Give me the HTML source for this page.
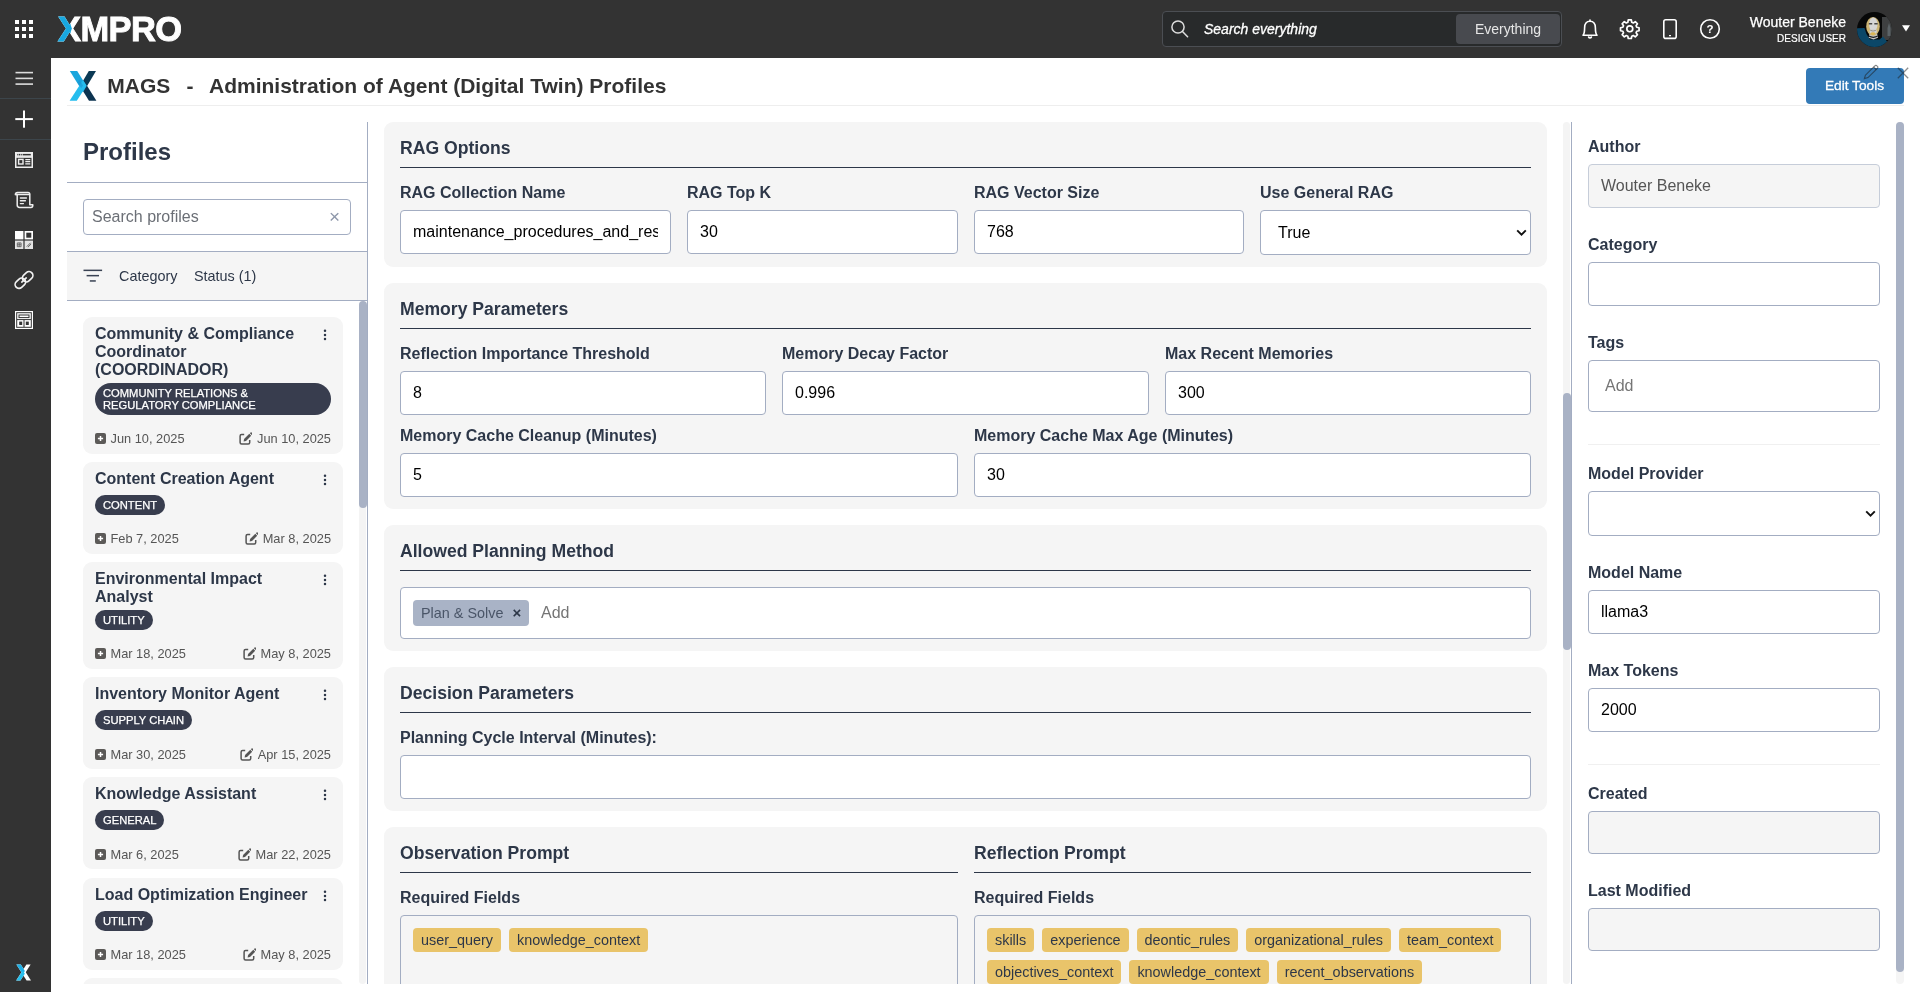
<!DOCTYPE html>
<html lang="en">
<head>
<meta charset="utf-8">
<title>MAGS - Administration of Agent (Digital Twin) Profiles</title>
<style>
*{box-sizing:border-box;margin:0;padding:0}
html,body{width:1920px;height:992px;overflow:hidden;background:#fff}
body{will-change:transform;font-family:"Liberation Sans",Arial,Helvetica,sans-serif;color:#2d3748;position:relative}
.abs{position:absolute}
/* ---------- top bar ---------- */
#topbar{position:absolute;left:0;top:0;width:1920px;height:58px;background:#333}
#sidebar{position:absolute;left:0;top:58px;width:51px;height:934px;background:#333}
.sep{position:absolute;left:0;width:51px;height:1px;background:#3c454b}
#brand{position:absolute;left:58px;top:8px;font-size:35px;line-height:41px;font-weight:bold;color:#fff;letter-spacing:-0.6px;white-space:nowrap;-webkit-text-stroke:0.9px #fff;transform-origin:0 0;transform:scaleX(0.985)}
#brand .bx{position:relative;display:inline-block}
#brand .bx::before{content:"X";position:absolute;left:0;top:0;color:#18a8e0;-webkit-text-stroke:0.9px #18a8e0;clip-path:polygon(-2px 0,30% 0,62% 50%,30% 100%,-2px 100%)}
#gsearch{position:absolute;left:1162px;top:11px;width:400px;height:36px;border:1px solid #4b4e53;border-radius:4px;background:#282a2b}
#gsearch .ph{position:absolute;left:41px;top:9px;font-size:14px;line-height:16px;font-style:italic;color:#fff;white-space:nowrap;-webkit-text-stroke:0.3px #fff}
#gsearch .btn{position:absolute;left:293px;top:2px;width:104px;height:30px;border-radius:4px;background:#484a4f;color:#e6e6e6;font-size:14px;line-height:30px;text-align:center}
#uname{position:absolute;right:74px;top:14px;font-size:14px;line-height:16px;color:#fff;white-space:nowrap;-webkit-text-stroke:0.25px #fff}
#urole{position:absolute;right:74px;top:32.6px;font-size:10px;line-height:12px;color:#fff;white-space:nowrap;-webkit-text-stroke:0.2px #fff}
/* ---------- title ---------- */
#title span{position:absolute;top:74px;font-size:21px;line-height:24px;font-weight:bold;color:#333;white-space:nowrap}
#titleline{position:absolute;left:67px;top:105px;width:1837px;height:1px;background:#eeeeee}
#edittools{position:absolute;left:1806px;top:68px;width:98px;height:36px;border-radius:4px;background:#337ab7;color:#fff;font-size:13.7px;line-height:36px;text-align:center;padding-right:1px;-webkit-text-stroke:0.3px #fff}
/* ---------- left panel ---------- */
#left{position:absolute;left:67px;top:122px;width:301px;height:862px;border-right:1px solid #a3adc2;overflow:hidden}
#left h2{position:absolute;left:16px;top:14.8px;font-size:24px;line-height:30px;font-weight:bold;color:#2d3748}
.hl{position:absolute;left:0;width:300px;height:1px;background:#a3adc2}
#psearch{position:absolute;left:16px;top:77px;width:268px;height:36px;border:1px solid #a3adc2;border-radius:4px;background:#fff}
#psearch .ph{position:absolute;left:8px;top:8px;font-size:16px;line-height:18px;color:#6b6f76}
#psearch .x{position:absolute;right:10px;top:7.5px;font-size:19px;line-height:18px;color:#8f98ab}
#filter{position:absolute;left:0;top:130px;width:300px;height:48px;background:#f5f5f5}
#filter span{position:absolute;top:16px;font-size:14.4px;line-height:17px;color:#2d3748}
#list{position:absolute;left:16px;top:195px;width:260px}
.card{position:relative;width:260px;background:#f5f5f5;border-radius:9px;padding:8px 12px 7.5px 12px;margin-bottom:8.3px}
.card .t{min-height:21.4px;font-size:16px;line-height:18px;font-weight:bold;color:#2d3748;padding-right:22px}
.card .k{position:absolute;right:16px;top:12px;width:4px;height:12px}
.pill{display:inline-block;vertical-align:top;margin-top:3.6px;background:#383d4e;color:#fff;border-radius:16px;font-size:11.2px;line-height:12px;padding:4px 8px;text-transform:uppercase;-webkit-text-stroke:0.25px #fff}
.card .d{display:flex;justify-content:space-between;margin-top:16.5px;font-size:12.8px;line-height:15px;color:#555;height:15px}
.card .d span{display:flex;align-items:center}
.card .d svg{margin-right:4.5px;display:block}
.thumb{position:absolute;background:#a9b2c5;border-radius:4px}
/* ---------- middle panel ---------- */
#mid{position:absolute;left:384px;top:122px;width:1163px;height:862px;overflow:hidden}
.sec{position:absolute;left:0;width:1163px;background:#f5f5f5;border-radius:9px}
.sec h3{position:absolute;left:16px;top:16px;font-size:17.6px;line-height:21px;font-weight:bold;color:#2d3748;padding-bottom:8px;border-bottom:1px solid #2d3748;width:1131px;white-space:nowrap}
.lb{position:absolute;font-size:16px;line-height:18px;font-weight:bold;color:#2d3748;white-space:nowrap}
.in{position:absolute;height:44px;border:1px solid #a3adc2;border-radius:4px;background:#fff;font-size:16px;line-height:18px;color:#000;padding:11.5px 12px 0 12px;white-space:nowrap;overflow:hidden}
.in.dis{background:#f5f5f5;color:#555}
.in .clip{display:block;overflow:hidden;width:100%}
.box{position:absolute;border:1px solid #a3adc2;border-radius:4px;background:#fff}
.chip{position:absolute;border-radius:4px;font-size:14.4px;line-height:16px;white-space:nowrap;padding:4px 8px;height:24px;background:#e9c46a;color:#2d3748}
.add{position:absolute;font-size:16px;line-height:18px;color:#757575}
/* ---------- right panel ---------- */
#right{position:absolute;left:1571px;top:122px;width:333px;height:862px;border-left:1px solid #a3adc2;overflow:hidden}
#right .lb{left:16px}
#right .in,#right .box{left:16px;width:292px}
.hr{position:absolute;left:16px;width:292px;height:1px;background:#f0f0f0}
.flexchips{display:flex;flex-wrap:wrap;align-content:flex-start;gap:8px;padding:12px 12px}
.fc{display:block;border-radius:4px;font-size:14.4px;line-height:16px;white-space:nowrap;padding:4px 8px;height:24px;background:#e9c46a;color:#2d3748}
</style>
</head>
<body>
<div id="topbar">
<svg class="abs" style="left:15px;top:20px" width="18" height="18" viewBox="0 0 18 18" fill="#fff"><rect x="0" y="0" width="4" height="4"/><rect x="7" y="0" width="4" height="4"/><rect x="14" y="0" width="4" height="4"/><rect x="0" y="7" width="4" height="4"/><rect x="7" y="7" width="4" height="4"/><rect x="14" y="7" width="4" height="4"/><rect x="0" y="14" width="4" height="4"/><rect x="7" y="14" width="4" height="4"/><rect x="14" y="14" width="4" height="4"/></svg>
<div id="brand"><span class="bx">X</span>MPRO</div>
<div id="gsearch">
<svg class="abs" style="left:4.8px;top:5.3px" width="24" height="24" viewBox="0 0 24 24" fill="none" stroke="#ddd" stroke-width="1.5" stroke-linecap="round"><circle cx="10" cy="10" r="6.1"/><path d="M14.5 14.5 L19.6 19.8"/></svg>
<div class="ph">Search everything</div>
<div class="btn">Everything</div>
</div>
<svg class="abs" style="left:1580px;top:17px" width="20" height="24" viewBox="0 0 20 24" fill="none" stroke="#fff" stroke-width="1.6" stroke-linejoin="round" stroke-linecap="round"><path d="M3 18.2 C4.6 16.6 4.6 14.5 4.6 11 C4.6 6.6 6.8 4.3 10 4.3 C13.2 4.3 15.4 6.6 15.4 11 C15.4 14.5 15.4 16.6 17 18.2 Z"/><path d="M8.6 20 A1.6 1.6 0 0 0 11.4 20"/><path d="M10 4.2 V3"/></svg>
<svg class="abs" style="left:1619px;top:18px" width="21.6" height="21.6" viewBox="0 0 24 24" fill="none" stroke="#fff" stroke-width="1.9" stroke-linejoin="round"><path d="M10.3 2.2h3.4l.5 2.6 1.7.7 2.2-1.5 2.4 2.4-1.5 2.2.7 1.7 2.6.5v3.4l-2.6.5-.7 1.7 1.5 2.2-2.4 2.4-2.2-1.5-1.7.7-.5 2.6h-3.4l-.5-2.6-1.7-.7-2.2 1.5-2.4-2.4 1.5-2.2-.7-1.7-2.6-.5v-3.4l2.6-.5.7-1.7-1.5-2.2 2.4-2.4 2.2 1.5 1.7-.7z"/><circle cx="12" cy="12" r="3.3"/></svg>
<svg class="abs" style="left:1660px;top:17px" width="20" height="24" viewBox="0 0 20 24" fill="none" stroke="#fff" stroke-width="1.6"><rect x="3.8" y="2.8" width="12.4" height="18.6" rx="2"/><path d="M9 18.6h2" stroke-width="1.4"/></svg>
<svg class="abs" style="left:1698px;top:17px" width="24" height="24" viewBox="0 0 24 24"><circle cx="12" cy="12" r="9.3" fill="none" stroke="#fff" stroke-width="1.6"/><text x="12" y="16.2" text-anchor="middle" font-family="Liberation Sans, Arial, sans-serif" font-weight="bold" font-size="11.5" fill="#fff">?</text></svg>
<div id="uname">Wouter Beneke</div>
<div id="urole">DESIGN USER</div>
<svg class="abs" style="left:1857px;top:12px" width="35" height="35" viewBox="0 0 35 35"><defs><clipPath id="av"><circle cx="17.5" cy="17.5" r="17.5"/></clipPath></defs><g clip-path="url(#av)"><rect width="35" height="35" fill="#070808"/><rect x="25" y="5" width="10" height="23" fill="#3e4041"/><path d="M30.500 24V16l1.500-5 1.500 5v8z" fill="#5b6367"/><path d="M0 16.200L7.500 16 9.500 22 13 27.500 22.500 27.500 26 24.500 30 29.500 35 35H0Z" fill="#0b4768"/><path d="M33 28l-4 3 3 4 3-3z" fill="#8a7a4a"/><path d="M12.500 21h7.500l1 4.800-4.500 1.700-4.800-1.700z" fill="#c4c4c4"/><ellipse cx="16" cy="14.400" rx="6.800" ry="9.400" fill="#cdb574"/><ellipse cx="16.300" cy="12.500" rx="4.200" ry="7" fill="#d6d6d6"/><ellipse cx="16.200" cy="19.500" rx="3.600" ry="2.400" fill="#cfcfcf"/><ellipse cx="16" cy="21.600" rx="2.400" ry="1.300" fill="#dcb655"/><path d="M11.800 11h3.400v1.400h-3.400zM17.300 11h3.400v1.400h-3.400z" fill="#4a4a48"/><path d="M13 17.800c2 1.200 4.200 1.200 6.200 0-1 2-5.200 2-6.200 0z" fill="#6a6456"/><path d="M11.800 23.600c3 1.500 6 1.500 8.800 0v1.200c-2.800 1.500-5.800 1.500-8.800 0z" fill="#1a1c1e"/></g></svg>
<svg class="abs" style="left:1902px;top:25px" width="8" height="7" viewBox="0 0 8 7"><path d="M0 0.3h8L4 6.6z" fill="#fff"/></svg>
</div>
<div id="sidebar">
<svg class="abs" style="left:15px;top:13px" width="19" height="14" viewBox="0 0 19 14" fill="#dcdcdc"><rect x="0.5" y="0.8" width="17.5" height="1.6"/><rect x="0.5" y="6.6" width="17.5" height="1.6"/><rect x="0.5" y="12.3" width="17.5" height="1.6"/></svg>
<div class="sep" style="top:40px"></div>
<svg class="abs" style="left:15px;top:52px" width="18" height="18" viewBox="0 0 18 18" fill="#fff"><rect x="8" y="0.5" width="2" height="17.2"/><rect x="0.3" y="8.1" width="17.6" height="2"/></svg>
<div class="sep" style="top:81px"></div>
<svg class="abs" style="left:15px;top:94px" width="18" height="16" viewBox="0 0 18 16" fill="none" stroke="#eee"><rect x="0.75" y="0.75" width="16.5" height="14.5" stroke-width="1.5"/><path d="M0.75 5.2h16.5" stroke-width="1.3"/><path d="M2.6 3h0.9M4.6 3h0.9M6.6 3h0.9" stroke-width="1.1" stroke="#333" /><rect x="0.75" y="0.75" width="16.5" height="4.2" fill="#eee" stroke="none"/><rect x="7.6" y="1.9" width="8.2" height="1.5" fill="#333" stroke="none"/><rect x="2.3" y="1.9" width="1.1" height="1.5" fill="#333" stroke="none"/><rect x="4" y="1.9" width="1.1" height="1.5" fill="#333" stroke="none"/><rect x="5.7" y="1.9" width="1.1" height="1.5" fill="#333" stroke="none"/><rect x="3.6" y="7.4" width="4.4" height="4.6" stroke-width="1.4"/><path d="M10.3 7.6h5M10.3 9.7h5M10.3 11.8h5" stroke-width="1.2"/></svg>
<svg class="abs" style="left:14px;top:133px" width="20" height="18" viewBox="0 0 20 18" fill="none" stroke="#eee" stroke-width="1.5" stroke-linejoin="round" stroke-linecap="round"><path d="M3.2 3.6V14a2.4 2.4 0 0 0 2.4 2.4H17a1.8 1.8 0 0 0 1.8-1.8v-.8h-3V3.2A1.8 1.8 0 0 0 14 1.4H3.4a2 2 0 0 0-2 2.2z"/><path d="M1.6 3.6h13.8" /><path d="M6.4 7h6M6.4 9.8h5M6.4 12.6h3" stroke-width="1.4"/></svg>
<svg class="abs" style="left:15px;top:173px" width="18" height="18" viewBox="0 0 18 18"><rect x="0" y="0" width="8.4" height="8.4" fill="#fff"/><rect x="9.6" y="0" width="8.4" height="8.4" fill="#fff"/><rect x="11.3" y="1.7" width="5" height="5" fill="#333"/><rect x="0" y="9.6" width="8.4" height="8.4" fill="#e4e4e4"/><path d="M2.3 11.9h3.8v3.8H2.3zM2.3 13.8h3.8M4.2 11.9v3.8" fill="none" stroke="#444" stroke-width="0.7"/><rect x="9.6" y="9.6" width="8.4" height="8.4" fill="#e4e4e4"/><path d="M11.8 15.6l3.8-3.8M12.9 16.2l3.2-3.2" stroke="#444" stroke-width="0.8" fill="none"/></svg>
<svg class="abs" style="left:14px;top:212px" width="20" height="20" viewBox="0 0 20 20" fill="none" stroke="#f2f2f2" stroke-width="1.7" stroke-linecap="round"><g transform="rotate(-42 10 10)"><rect x="-0.6" y="6.1" width="11.4" height="7.8" rx="3.9"/><rect x="9.2" y="6.1" width="11.4" height="7.8" rx="3.9"/><path d="M7 10h6"/></g></svg>
<svg class="abs" style="left:15px;top:253px" width="18" height="18" viewBox="0 0 18 18"><rect width="18" height="18" fill="#fff"/><rect x="1.7" y="1.7" width="14.6" height="14.6" fill="none" stroke="#333" stroke-width="1"/><rect x="4" y="4" width="10" height="2.6" fill="none" stroke="#333" stroke-width="1"/><path d="M2 8.6h14" stroke="#333" stroke-width="1"/><rect x="4.2" y="10.6" width="3" height="3.4" fill="#333"/><rect x="10.8" y="10.6" width="3" height="3.4" fill="#333"/><path d="M9 8.6v7.4" stroke="#333" stroke-width="1"/></svg>
<svg class="abs" style="left:16.3px;top:905.7px" width="15.4" height="17.2" viewBox="0 0 16 18" preserveAspectRatio="none"><path d="M0.4 0.6h4.6L15.6 17.4h-4.6z" fill="#fff"/><path d="M15.2 0.6h-4.4L0.2 17.4h4.4z" fill="#fff"/><path d="M0.4 0.6h4.6L9.2 7.3 7 10.8z" fill="#1fb0e6"/><path d="M0.2 17.4h4.4L9.2 10.2 7 6.9z" fill="#27c0ee"/></svg>
</div>
<div id="title">
<svg class="abs" style="left:69px;top:70px" width="28" height="32" viewBox="0 0 28 32"><path d="M27 1h-7.2L12.6 13.2 16 19.4z" fill="#0c3a55"/><path d="M27.4 30.8h-7.4L12.4 18.6 16 12.4z" fill="#0c3350"/><path d="M0.8 1h7.4L17.6 16 14 22.2z" fill="#1aa6dd"/><path d="M0.6 30.8h7.2L17.6 15.4 14 10z" fill="#25bdee"/><path d="M8.6 12.6l3.6 5.6 1.8-2.8-3.6-5.8z" fill="#1b8fd0" opacity=".55"/></svg>
<span style="left:107.3px">MAGS</span><span style="left:186.5px">-</span><span style="left:209px">Administration of Agent (Digital Twin) Profiles</span>
</div>
<div id="titleline"></div>
<div id="edittools">Edit Tools</div>
<svg class="abs" style="left:1862px;top:64px" width="18" height="17" viewBox="0 0 18 17" fill="none" stroke="rgba(30,30,30,.55)" stroke-width="1.15"><path d="M2.4 14.6l1-3.4L12.8 1.8a1.5 1.5 0 0 1 2.2 0l.4.4a1.5 1.5 0 0 1 0 2.2L6 13.6z"/><path d="M11.6 3l2.6 2.6"/></svg>
<svg class="abs" style="left:1897px;top:67px" width="12" height="12" viewBox="0 0 12 12" fill="none" stroke="rgba(30,30,30,.5)" stroke-width="1.3"><path d="M0.8 0.8l10.4 10.4M11.2 0.8L0.8 11.2"/></svg>
<div id="left">
<h2>Profiles</h2>
<div class="hl" style="top:60px"></div>
<div id="psearch"><div class="ph">Search profiles</div><div class="x">×</div></div>
<div class="hl" style="top:129px"></div>
<div id="filter">
<svg class="abs" style="left:16px;top:17px" width="20" height="14" viewBox="0 0 20 14" fill="#3a4354"><rect x="0.5" y="0.6" width="18.6" height="1.5"/><rect x="3.6" y="5.9" width="12.4" height="1.5"/><rect x="6.8" y="11.2" width="6" height="1.5"/></svg>
<span style="left:52px">Category</span><span style="left:127px">Status (1)</span></div>
<div class="hl" style="top:178px"></div>
<div id="list">
<div class="card"><div class="t">Community &amp; Compliance Coordinator (COORDINADOR)</div><svg class="k" width="4" height="12" viewBox="0 0 4 12" fill="#2d3748"><circle cx="2" cy="1.7" r="1.25"/><circle cx="2" cy="5.9" r="1.25"/><circle cx="2" cy="10.1" r="1.25"/></svg><div><span class="pill">COMMUNITY RELATIONS &amp; REGULATORY COMPLIANCE</span></div><div class="d"><span><svg width="11" height="11" viewBox="0 0 11 11"><rect width="11" height="11" rx="2" fill="#5c5a58"/><path d="M5.5 2.9v5.2M2.9 5.5h5.2" stroke="#fff" stroke-width="1.5"/></svg>Jun 10, 2025</span><span><svg width="13" height="13" viewBox="0 0 13 13" fill="none"><path d="M5.2 2.4H2.6A1.5 1.5 0 0 0 1.1 3.9v6.6A1.5 1.5 0 0 0 2.6 12h6.6a1.5 1.5 0 0 0 1.5-1.5V7.9" stroke="#555" stroke-width="1.5"/><path d="M4.6 9.4l.5-2.4 5.2-5.2 1.9 1.9L7 8.9z" fill="#555"/><path d="M10.9 1.2l.6-.6a.9.9 0 0 1 1.2 0l.7.7a.9.9 0 0 1 0 1.2l-.6.6z" fill="#555"/></svg>Jun 10, 2025</span></div></div>
<div class="card"><div class="t">Content Creation Agent</div><svg class="k" width="4" height="12" viewBox="0 0 4 12" fill="#2d3748"><circle cx="2" cy="1.7" r="1.25"/><circle cx="2" cy="5.9" r="1.25"/><circle cx="2" cy="10.1" r="1.25"/></svg><div><span class="pill">CONTENT</span></div><div class="d"><span><svg width="11" height="11" viewBox="0 0 11 11"><rect width="11" height="11" rx="2" fill="#5c5a58"/><path d="M5.5 2.9v5.2M2.9 5.5h5.2" stroke="#fff" stroke-width="1.5"/></svg>Feb 7, 2025</span><span><svg width="13" height="13" viewBox="0 0 13 13" fill="none"><path d="M5.2 2.4H2.6A1.5 1.5 0 0 0 1.1 3.9v6.6A1.5 1.5 0 0 0 2.6 12h6.6a1.5 1.5 0 0 0 1.5-1.5V7.9" stroke="#555" stroke-width="1.5"/><path d="M4.6 9.4l.5-2.4 5.2-5.2 1.9 1.9L7 8.9z" fill="#555"/><path d="M10.9 1.2l.6-.6a.9.9 0 0 1 1.2 0l.7.7a.9.9 0 0 1 0 1.2l-.6.6z" fill="#555"/></svg>Mar 8, 2025</span></div></div>
<div class="card"><div class="t">Environmental Impact Analyst</div><svg class="k" width="4" height="12" viewBox="0 0 4 12" fill="#2d3748"><circle cx="2" cy="1.7" r="1.25"/><circle cx="2" cy="5.9" r="1.25"/><circle cx="2" cy="10.1" r="1.25"/></svg><div><span class="pill">UTILITY</span></div><div class="d"><span><svg width="11" height="11" viewBox="0 0 11 11"><rect width="11" height="11" rx="2" fill="#5c5a58"/><path d="M5.5 2.9v5.2M2.9 5.5h5.2" stroke="#fff" stroke-width="1.5"/></svg>Mar 18, 2025</span><span><svg width="13" height="13" viewBox="0 0 13 13" fill="none"><path d="M5.2 2.4H2.6A1.5 1.5 0 0 0 1.1 3.9v6.6A1.5 1.5 0 0 0 2.6 12h6.6a1.5 1.5 0 0 0 1.5-1.5V7.9" stroke="#555" stroke-width="1.5"/><path d="M4.6 9.4l.5-2.4 5.2-5.2 1.9 1.9L7 8.9z" fill="#555"/><path d="M10.9 1.2l.6-.6a.9.9 0 0 1 1.2 0l.7.7a.9.9 0 0 1 0 1.2l-.6.6z" fill="#555"/></svg>May 8, 2025</span></div></div>
<div class="card"><div class="t">Inventory Monitor Agent</div><svg class="k" width="4" height="12" viewBox="0 0 4 12" fill="#2d3748"><circle cx="2" cy="1.7" r="1.25"/><circle cx="2" cy="5.9" r="1.25"/><circle cx="2" cy="10.1" r="1.25"/></svg><div><span class="pill">SUPPLY CHAIN</span></div><div class="d"><span><svg width="11" height="11" viewBox="0 0 11 11"><rect width="11" height="11" rx="2" fill="#5c5a58"/><path d="M5.5 2.9v5.2M2.9 5.5h5.2" stroke="#fff" stroke-width="1.5"/></svg>Mar 30, 2025</span><span><svg width="13" height="13" viewBox="0 0 13 13" fill="none"><path d="M5.2 2.4H2.6A1.5 1.5 0 0 0 1.1 3.9v6.6A1.5 1.5 0 0 0 2.6 12h6.6a1.5 1.5 0 0 0 1.5-1.5V7.9" stroke="#555" stroke-width="1.5"/><path d="M4.6 9.4l.5-2.4 5.2-5.2 1.9 1.9L7 8.9z" fill="#555"/><path d="M10.9 1.2l.6-.6a.9.9 0 0 1 1.2 0l.7.7a.9.9 0 0 1 0 1.2l-.6.6z" fill="#555"/></svg>Apr 15, 2025</span></div></div>
<div class="card"><div class="t">Knowledge Assistant</div><svg class="k" width="4" height="12" viewBox="0 0 4 12" fill="#2d3748"><circle cx="2" cy="1.7" r="1.25"/><circle cx="2" cy="5.9" r="1.25"/><circle cx="2" cy="10.1" r="1.25"/></svg><div><span class="pill">GENERAL</span></div><div class="d"><span><svg width="11" height="11" viewBox="0 0 11 11"><rect width="11" height="11" rx="2" fill="#5c5a58"/><path d="M5.5 2.9v5.2M2.9 5.5h5.2" stroke="#fff" stroke-width="1.5"/></svg>Mar 6, 2025</span><span><svg width="13" height="13" viewBox="0 0 13 13" fill="none"><path d="M5.2 2.4H2.6A1.5 1.5 0 0 0 1.1 3.9v6.6A1.5 1.5 0 0 0 2.6 12h6.6a1.5 1.5 0 0 0 1.5-1.5V7.9" stroke="#555" stroke-width="1.5"/><path d="M4.6 9.4l.5-2.4 5.2-5.2 1.9 1.9L7 8.9z" fill="#555"/><path d="M10.9 1.2l.6-.6a.9.9 0 0 1 1.2 0l.7.7a.9.9 0 0 1 0 1.2l-.6.6z" fill="#555"/></svg>Mar 22, 2025</span></div></div>
<div class="card"><div class="t">Load Optimization Engineer</div><svg class="k" width="4" height="12" viewBox="0 0 4 12" fill="#2d3748"><circle cx="2" cy="1.7" r="1.25"/><circle cx="2" cy="5.9" r="1.25"/><circle cx="2" cy="10.1" r="1.25"/></svg><div><span class="pill">UTILITY</span></div><div class="d"><span><svg width="11" height="11" viewBox="0 0 11 11"><rect width="11" height="11" rx="2" fill="#5c5a58"/><path d="M5.5 2.9v5.2M2.9 5.5h5.2" stroke="#fff" stroke-width="1.5"/></svg>Mar 18, 2025</span><span><svg width="13" height="13" viewBox="0 0 13 13" fill="none"><path d="M5.2 2.4H2.6A1.5 1.5 0 0 0 1.1 3.9v6.6A1.5 1.5 0 0 0 2.6 12h6.6a1.5 1.5 0 0 0 1.5-1.5V7.9" stroke="#555" stroke-width="1.5"/><path d="M4.6 9.4l.5-2.4 5.2-5.2 1.9 1.9L7 8.9z" fill="#555"/><path d="M10.9 1.2l.6-.6a.9.9 0 0 1 1.2 0l.7.7a.9.9 0 0 1 0 1.2l-.6.6z" fill="#555"/></svg>May 8, 2025</span></div></div>
<div class="card" style="height:92px"></div>
</div>
<div class="abs" style="left:292px;top:179px;width:7px;height:683px;background:#f4f4f4;border-radius:4px"></div><div class="thumb" style="left:292px;top:179px;width:8px;height:207px"></div>
</div>
<div id="mid"><div class="sec" style="top:0;height:145px"><h3>RAG Options</h3><div class="lb" style="left:16px;top:62px">RAG Collection Name</div><div class="in " style="left:16px;top:88px;width:271px"><span class="clip">maintenance_procedures_and_resources</span></div><div class="lb" style="left:303px;top:62px">RAG Top K</div><div class="in " style="left:303px;top:88px;width:271px"><span class="clip">30</span></div><div class="lb" style="left:590px;top:62px">RAG Vector Size</div><div class="in " style="left:590px;top:88px;width:270px"><span class="clip">768</span></div><div class="lb" style="left:876px;top:62px">Use General RAG</div><div class="in" style="left:876px;top:88px;width:271px;height:45px;padding-left:17px;padding-top:12.5px">True<svg class="abs" style="right:3.5px;top:17.5px" width="11" height="8" viewBox="0 0 11 8" fill="none" stroke="#111" stroke-width="1.9"><path d="M1.2 1.4l4.3 4.3 4.3-4.3"/></svg></div></div><div class="sec" style="top:161px;height:225.5px"><h3>Memory Parameters</h3><div class="lb" style="left:16px;top:62px">Reflection Importance Threshold</div><div class="in " style="left:16px;top:88px;width:366px"><span class="clip">8</span></div><div class="lb" style="left:398px;top:62px">Memory Decay Factor</div><div class="in " style="left:398px;top:88px;width:367px"><span class="clip">0.996</span></div><div class="lb" style="left:781px;top:62px">Max Recent Memories</div><div class="in " style="left:781px;top:88px;width:366px"><span class="clip">300</span></div><div class="lb" style="left:16px;top:144px">Memory Cache Cleanup (Minutes)</div><div class="in " style="left:16px;top:170px;width:558px"><span class="clip">5</span></div><div class="lb" style="left:590px;top:144px">Memory Cache Max Age (Minutes)</div><div class="in " style="left:590px;top:170px;width:557px"><span class="clip">30</span></div></div><div class="sec" style="top:403px;height:126px"><h3>Allowed Planning Method</h3><div class="box" style="left:16px;top:62px;width:1131px;height:51.5px"><div class="chip" style="left:12px;top:12px;height:26px;padding:5px 8px;background:#a9b3c6;color:#4a5568">Plan &amp; Solve<span style="margin-left:9px;font-size:15px;font-weight:bold;color:#2d3748;position:relative;top:-0.5px">×</span></div><div class="add" style="left:140px;top:16px">Add</div></div></div><div class="sec" style="top:545px;height:144px"><h3>Decision Parameters</h3><div class="lb" style="left:16px;top:62px">Planning Cycle Interval (Minutes):</div><div class="in " style="left:16px;top:88px;width:1131px"><span class="clip"></span></div></div><div class="sec" style="top:705px;height:400px"><h3 style="width:558px">Observation Prompt</h3><h3 style="left:590px;width:557px">Reflection Prompt</h3><div class="lb" style="left:16px;top:62px">Required Fields</div><div class="lb" style="left:590px;top:62px">Required Fields</div><div class="box flexchips" style="left:16px;top:88px;width:558px;height:200px;background:transparent"><span class="fc">user_query</span><span class="fc">knowledge_context</span></div><div class="box flexchips" style="left:590px;top:88px;width:557px;height:200px;background:transparent"><span class="fc">skills</span><span class="fc">experience</span><span class="fc">deontic_rules</span><span class="fc">organizational_rules</span><span class="fc">team_context</span><span class="fc">objectives_context</span><span class="fc">knowledge_context</span><span class="fc">recent_observations</span></div></div></div>
<div class="abs" style="left:1563px;top:122px;width:7px;height:862px;background:#f4f4f4;border-radius:4px"></div><div class="thumb" style="left:1563px;top:393px;width:8px;height:257px"></div>
<div id="right"><div class="lb" style="left:16px;top:16px">Author</div><div class="in dis" style="left:16px;top:42px;width:292px;border-color:#c6cdd9"><span class="clip">Wouter Beneke</span></div><div class="lb" style="left:16px;top:114px">Category</div><div class="in " style="left:16px;top:140px;width:292px"><span class="clip"></span></div><div class="lb" style="left:16px;top:212px">Tags</div><div class="box" style="top:238px;height:52px"><div class="add" style="left:16px;top:16px">Add</div></div><div class="hr" style="top:322px"></div><div class="lb" style="left:16px;top:343px">Model Provider</div><div class="in" style="top:369px;height:45px"><svg class="abs" style="right:3.5px;top:17.5px" width="11" height="8" viewBox="0 0 11 8" fill="none" stroke="#111" stroke-width="1.9"><path d="M1.2 1.4l4.3 4.3 4.3-4.3"/></svg></div><div class="lb" style="left:16px;top:442px">Model Name</div><div class="in " style="left:16px;top:468px;width:292px"><span class="clip">llama3</span></div><div class="lb" style="left:16px;top:540px">Max Tokens</div><div class="in " style="left:16px;top:566px;width:292px"><span class="clip">2000</span></div><div class="hr" style="top:642px"></div><div class="lb" style="left:16px;top:663px">Created</div><div class="in dis" style="left:16px;top:689px;width:292px;height:43px"><span class="clip"></span></div><div class="lb" style="left:16px;top:760px">Last Modified</div><div class="in dis" style="left:16px;top:786px;width:292px;height:43px"><span class="clip"></span></div><div class="abs" style="left:324px;top:0;width:8px;height:862px;background:#f5f5f5;border-radius:4px"></div><div class="thumb" style="left:324px;top:0;width:8px;height:850px"></div></div>
</body>
</html>
